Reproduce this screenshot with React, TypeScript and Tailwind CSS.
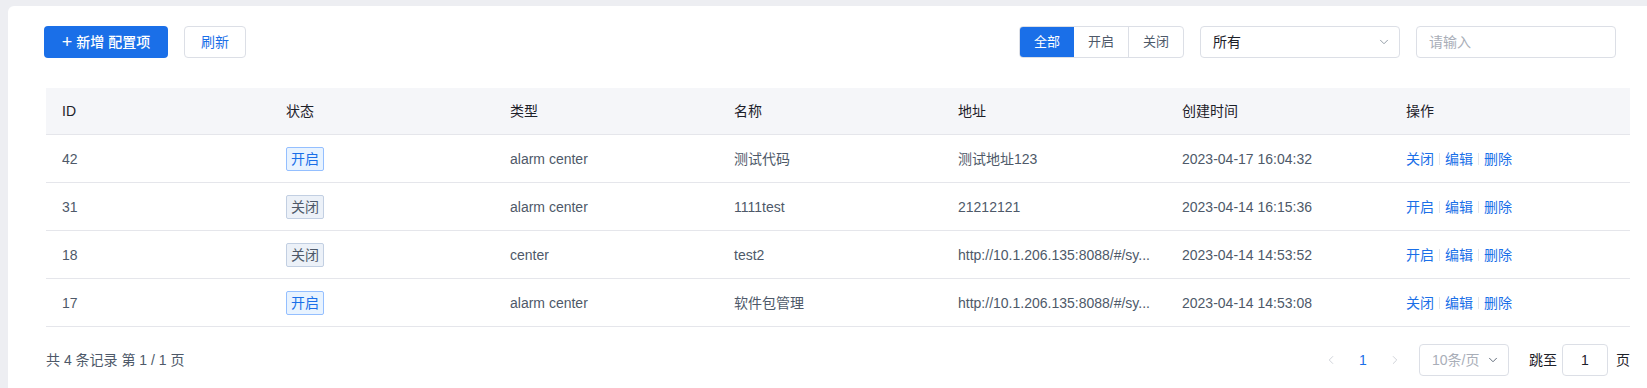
import { ChevronDown, ChevronLeft, ChevronRight } from "lucide-react";

type Row = {
  id: number;
  on: boolean;
  type: string;
  name: string;
  addr: string;
  created: string;
};

const rows: Row[] = [
  { id: 42, on: true, type: "alarm center", name: "测试代码", addr: "测试地址123", created: "2023-04-17 16:04:32" },
  { id: 31, on: false, type: "alarm center", name: "1111test", addr: "21212121", created: "2023-04-14 16:15:36" },
  { id: 18, on: false, type: "center", name: "test2", addr: "http://10.1.206.135:8088/#/sy...", created: "2023-04-14 14:53:52" },
  { id: 17, on: true, type: "alarm center", name: "软件包管理", addr: "http://10.1.206.135:8088/#/sy...", created: "2023-04-14 14:53:08" },
];

const cols = "grid grid-cols-[224px_224px_224px_224px_224px_224px_1fr]";

function StatusTag({ on }: { on: boolean }) {
  return on ? (
    <span className="inline-flex h-6 items-center rounded-[2px] border border-[#94bfff] bg-[#e8f3ff] px-1 text-[#1a6fe8]">开启</span>
  ) : (
    <span className="inline-flex h-6 items-center rounded-[2px] border border-[#c2cfe2] bg-[#ecf1f8] px-1 text-[#4e5969]">关闭</span>
  );
}

export default function App() {
  return (
    <div className="min-h-[388px] bg-[#edeef2] pt-[6px] pl-2 font-['Liberation_Sans','Noto_Sans_CJK_SC',sans-serif] text-sm">
      <div className="min-h-[382px] rounded-tl-[6px] bg-white pt-5 pb-4">
        {/* toolbar */}
        <div className="flex items-center justify-between pl-[36px] pr-[31px]">
          <div className="flex items-center gap-4">
            <button className="flex h-8 w-[124px] items-center justify-center gap-1 rounded bg-[#1a6fe8] font-medium text-white">
              <span className="text-[18px] font-light leading-none">+</span>
              新增 配置项
            </button>
            <button className="h-8 w-[62px] rounded border border-[#dcdfe6] bg-white text-[#1a6fe8]">刷新</button>
          </div>
          <div className="flex items-center gap-4">
            <div className="flex h-8 overflow-hidden rounded border border-[#dcdfe6]">
              <button className="w-[54px] bg-[#1a6fe8] text-[13px] text-white">全部</button>
              <button className="w-[55px] border-r border-[#dcdfe6] text-[13px] text-[#4e5969]">开启</button>
              <button className="w-[54px] text-[13px] text-[#4e5969]">关闭</button>
            </div>
            <div className="flex h-8 w-[200px] items-center justify-between rounded border border-[#dcdfe6] pl-3 pr-2 text-[#1d2129]">
              <span>所有</span>
              <ChevronDown className="h-3.5 w-3.5 text-[#86909c]" strokeWidth={1.5} />
            </div>
            <input
              placeholder="请输入"
              className="h-8 w-[200px] rounded border border-[#dcdfe6] px-3 text-[#1d2129] placeholder-[#a9aeb8] outline-none"
            />
          </div>
        </div>

        {/* table */}
        <div className="mt-[30px] ml-[38px] mr-[17px]">
          <div className={`${cols} h-[47px] items-center border-b border-[#e5e6eb] bg-[#f5f6f9] text-[#1d2129]`}>
            <div className="pl-4">ID</div>
            <div className="pl-4">状态</div>
            <div className="pl-4">类型</div>
            <div className="pl-4">名称</div>
            <div className="pl-4">地址</div>
            <div className="pl-4">创建时间</div>
            <div className="pl-4">操作</div>
          </div>
          {rows.map((r) => (
            <div key={r.id} className={`${cols} h-[48px] items-center border-b border-[#e5e6eb] text-[#4e5969]`}>
              <div className="pl-4">{r.id}</div>
              <div className="pl-4">
                <StatusTag on={r.on} />
              </div>
              <div className="pl-4">{r.type}</div>
              <div className="pl-4">{r.name}</div>
              <div className="truncate pl-4 pr-3">{r.addr}</div>
              <div className="pl-4">{r.created}</div>
              <div className="flex items-center pl-4 text-[#1a6fe8]">
                <span>{r.on ? "关闭" : "开启"}</span>
                <span className="mx-[5px] h-3 w-px bg-[#e5e6eb]" />
                <span>编辑</span>
                <span className="mx-[5px] h-3 w-px bg-[#e5e6eb]" />
                <span>删除</span>
              </div>
            </div>
          ))}
        </div>

        {/* footer */}
        <div className="mt-[17px] ml-[38px] mr-[17px] flex items-center justify-between text-[#4e5969]">
          <span>共 4 条记录 第 1 / 1 页</span>
          <div className="flex items-center">
            <span className="flex h-8 w-8 items-center justify-center text-[#c9cdd4]">
              <ChevronLeft className="h-3.5 w-3.5" strokeWidth={1.5} />
            </span>
            <span className="flex h-8 w-8 items-center justify-center text-[#1a6fe8]">1</span>
            <span className="flex h-8 w-8 items-center justify-center text-[#c9cdd4]">
              <ChevronRight className="h-3.5 w-3.5" strokeWidth={1.5} />
            </span>
            <div className="ml-2 flex h-8 w-[90px] items-center justify-between rounded border border-[#dcdfe6] pl-3 pr-2 text-[#a9aeb8]">
              <span>10条/页</span>
              <ChevronDown className="h-3.5 w-3.5 text-[#4e5969]" strokeWidth={1.5} />
            </div>
            <span className="ml-5 text-[#1d2129]">跳至</span>
            <div className="ml-[5px] flex h-8 w-[46px] items-center justify-center rounded border border-[#dcdfe6] text-[#1d2129]">1</div>
            <span className="ml-2 text-[#1d2129]">页</span>
          </div>
        </div>
      </div>
    </div>
  );
}
